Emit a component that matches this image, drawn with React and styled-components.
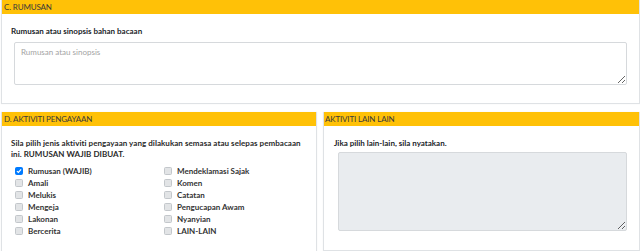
import React from "react";
import styled, { createGlobalStyle } from "styled-components";

const Global = createGlobalStyle`
  html, body { margin: 0; padding: 0; background: #ffffff; }
  body { font-family: Lato, "Noto Sans", sans-serif; color: #212529; }
  * { box-sizing: border-box; }
`;

const Page = styled.div`
  width: 640px;
  padding-left: 1px;
  display: flex;
  flex-direction: column;
  gap: 8px;
`;

const Row = styled.div`
  display: grid;
  grid-template-columns: 316px 317px;
  gap: 6px;
`;

const Card = styled.section`
  border: 1px solid #dfe2e5;
  border-top: none;
  background: #fff;
  box-shadow: 0 0 1px rgba(0, 0, 0, 0.08);
  height: ${(p) => p.$h || "auto"};
`;

const CardHeader = styled.div`
  background: #ffc107;
  height: 14px;
  padding: 0 ${(p) => p.$pad || 2}px;
  font-size: 8px;
  line-height: 15px;
  color: #3a3a3a;
  letter-spacing: -0.15px;
`;

const CardBody = styled.div`
  padding: ${(p) => p.$pad || "12px 12px 18px 9px"};
`;

const Label = styled.div`
  font-size: 8px;
  font-weight: 700;
  line-height: 11px;
  color: #212529;
  margin-bottom: ${(p) => p.$mb || 4}px;
`;

const TextArea = styled.textarea`
  display: block;
  width: calc(100% - ${(p) => p.$ml || 3}px);
  margin-left: ${(p) => p.$ml || 3}px;
  height: ${(p) => p.$h}px;
  border: 1px solid #d6d9dc;
  border-radius: 2px;
  background: ${(p) => (p.disabled ? "#e9ecef" : "#fff")};
  font-family: inherit;
  font-size: 8px;
  padding: 4px 6px;
  color: #495057;
  resize: vertical;
  &::placeholder { color: #a3a3a3; }
`;

const Intro = styled.p`
  margin: 0 0 5px;
  font-size: 8px;
  font-weight: 700;
  line-height: 11px;
  color: #2a2a2a;
  width: 298px;
  letter-spacing: 0.05px;
`;

const CheckGrid = styled.div`
  display: grid;
  grid-template-columns: 149px 1fr;
  grid-auto-flow: column;
  grid-template-rows: repeat(6, 12px);
  padding-left: 4px;
`;

const CheckItem = styled.label`
  display: flex;
  align-items: center;
  gap: 5px;
  font-size: 8px;
  font-weight: 700;
  color: #333;
`;

const Box = styled.span`
  width: 8px;
  height: 8px;
  border-radius: 1.5px;
  flex: none;
  display: flex;
  align-items: center;
  justify-content: center;
  background: ${(p) => (p.$checked ? "#007bff" : "#e2e4e6")};
  border: 1px solid ${(p) => (p.$checked ? "#007bff" : "#c3c7cb")};
`;

const leftItems = [
  ["Rumusan (WAJIB)", true],
  ["Amali"],
  ["Melukis"],
  ["Mengeja"],
  ["Lakonan"],
  ["Bercerita"],
  ["Mendeklamasi Sajak"],
  ["Komen"],
  ["Catatan"],
  ["Pengucapan Awam"],
  ["Nyanyian"],
  ["LAIN-LAIN"],
];

export default function App() {
  return (
    <>
      <Global />
      <Page>
        <Card>
          <CardHeader>C. RUMUSAN</CardHeader>
          <CardBody>
            <Label $mb={5}>Rumusan atau sinopsis bahan bacaan</Label>
            <TextArea $h={43} placeholder="Rumusan atau sinopsis" />
          </CardBody>
        </Card>
        <Row>
          <Card $h="140px">
            <CardHeader>D. AKTIVITI PENGAYAAN</CardHeader>
            <CardBody $pad="12px 10px 10px 9px">
              <Intro>
                Sila pilih jenis aktiviti pengayaan yang dilakukan semasa atau selepas pembacaan ini. RUMUSAN WAJIB DIBUAT.
              </Intro>
              <CheckGrid>
                {leftItems.map(([t, c]) => (
                  <CheckItem key={t}>
                    <Box $checked={c}>
                      {c && (
                        <svg width="6" height="6" viewBox="0 0 8 8">
                          <path d="M1.2 4.2 L3.2 6 L6.8 1.8" fill="none" stroke="#fff" strokeWidth="1.6" />
                        </svg>
                      )}
                    </Box>
                    {t}
                  </CheckItem>
                ))}
              </CheckGrid>
            </CardBody>
          </Card>
          <Card $h="139px">
            <CardHeader $pad={1}>AKTIVITI LAIN LAIN</CardHeader>
            <CardBody $pad="12px 12px 10px 10px">
              <Label $mb={3}>Jika pilih lain-lain, sila nyatakan.</Label>
              <TextArea $h={79} $ml={4} disabled />
            </CardBody>
          </Card>
        </Row>
      </Page>
    </>
  );
}
